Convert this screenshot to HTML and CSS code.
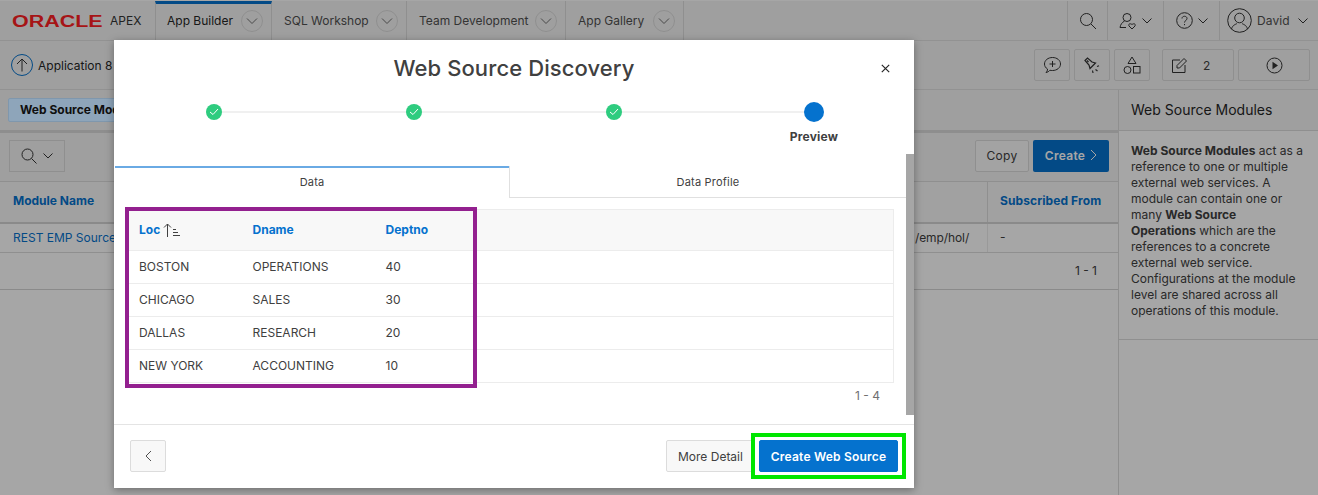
FILE: index.html
```html
<!DOCTYPE html>
<html lang="en">

<head>
  <meta charset="UTF-8" />
  <title>Web Source Discovery</title>
  <link rel="stylesheet" href="styles.css">
</head>

<body>
  <header class="topbar">
    <div class="logo"><span class="logo-oracle">ORACLE</span><span class="logo-apex">APEX</span></div>
    <nav class="tabs">
      <div class="tab tab-active tab-builder"><span>App Builder</span><span class="tab-menu"><svg width="12" height="8" viewBox="0 0 12 8"><path d="M1 1.5l5 5 5-5" /></svg></span></div>
      <div class="tab tab-sql"><span>SQL Workshop</span><span class="tab-menu"><svg width="12" height="8" viewBox="0 0 12 8"><path d="M1 1.5l5 5 5-5" /></svg></span></div>
      <div class="tab tab-team"><span>Team Development</span><span class="tab-menu"><svg width="12" height="8" viewBox="0 0 12 8"><path d="M1 1.5l5 5 5-5" /></svg></span></div>
      <div class="tab tab-gallery"><span>App Gallery</span><span class="tab-menu"><svg width="12" height="8" viewBox="0 0 12 8"><path d="M1 1.5l5 5 5-5" /></svg></span></div>
    </nav>
    <div class="top-actions">
      <div class="top-action action-search">
        <svg class="line-icon" width="18" height="18" viewBox="0 0 18 18"><circle cx="7.5" cy="7.5" r="6" /><path d="M12 12l5 5" /></svg>
      </div>
      <div class="top-action action-admin">
        <svg class="line-icon" width="18" height="18" viewBox="0 0 18 18"><circle cx="8" cy="5.5" r="4" /><path d="M5.5 9C3 10.5 1.5 12.5 1 15.5h6" /><path d="M13 17l-3-3c-1-2 1-3 3-1.500 2-1.500 4-.5 3 1.500z" /></svg>
        <svg class="line-icon" width="10" height="6" viewBox="0 0 10 6"><path d="M.5.5L5 5 9.5.5" /></svg>
      </div>
      <div class="top-action action-help">
        <svg class="line-icon" width="17" height="17" viewBox="0 0 17 17"><circle cx="8.5" cy="8.5" r="7.8" /><path d="M6 6.500c0-3 5-3 5 0 0 2-2.500 2-2.500 4M8.500 12v1.200" /></svg>
        <svg class="line-icon" width="10" height="6" viewBox="0 0 10 6"><path d="M.5.5L5 5 9.5.5" /></svg>
      </div>
      <div class="top-action action-user">
        <svg class="line-icon" width="25" height="25" viewBox="0 0 25 25"><circle cx="12.5" cy="12.5" r="11.8" /><circle cx="12.5" cy="10" r="4.8" /><path d="M4.500 21c1-4 4-4.500 5.500-5.500M20.500 21c-1-4-4-4.500-5.500-5.500" /></svg>
        <span class="user-name">David</span>
        <svg class="line-icon" width="10" height="6" viewBox="0 0 10 6"><path d="M.5.5L5 5 9.5.5" /></svg>
      </div>
    </div>
  </header>

  <div class="toolbar">
    <div class="crumb">
      <span class="up-circle"><svg class="line-icon" width="12" height="14" viewBox="0 0 12 14"><path d="M6 13.500V1M1 6l5-5 5 5" /></svg></span>
      <span>Application 8</span>
    </div>
    <div class="tool-buttons">
      <div class="tool-btn"><svg class="line-icon" width="19" height="18" viewBox="0 0 19 18"><path d="M9.500 1.500c4.500 0 8 2.800 8 6.500s-3.500 6.500-8 6.500c-1 0-1.800 0-2.500-.3-1 1.300-2.500 2-4 2.300 1-1 1.500-2 1.500-3.500-2-1.200-3-3-3-5 0-3.700 3.500-6.500 8-6.500z" /><path d="M9.500 5v6M6.500 8h6" /></svg></div>
      <div class="tool-btn"><svg class="line-icon icon-torch" width="17" height="17" viewBox="0 0 17 17"><path d="M1 3.500L3.500 1l4.500 4 3.500 1L6 11.500 5 8z" /><path d="M3 3.500l1.500 1.500" /><path d="M13 9.500l2-.8M11.500 12.500l2 1.500M8.500 13.500l.5 2.500" /></svg></div>
      <div class="tool-btn"><svg class="line-icon" width="18" height="19" viewBox="0 0 18 19"><path d="M9 1l4 6.500H5z" /><circle cx="4.5" cy="14" r="3.5" /><rect x="10.5" y="10.5" width="6.500" height="6.500" /></svg></div>
      <div class="tool-btn tool-btn-wide tool-edit"><svg class="line-icon" width="17" height="17" viewBox="0 0 17 17"><path d="M9 3H1.500v12.500H14V8" /><path d="M6 8.500L13 1.500l2.500 2.500-7 7H6z" /></svg><span>2</span></div>
      <div class="tool-btn tool-btn-wide"><svg class="line-icon" width="17" height="17" viewBox="0 0 17 17"><circle cx="8.5" cy="8.5" r="7.5" /><path class="icon-fill" d="M6.500 4.800l5.500 3.700-5.500 3.700z" /></svg></div>
    </div>
  </div>

  <div class="main">
    <div class="content">
      <div class="breadcrumb-row"><span class="chip">Web Source Modules</span></div>
      <div class="report-bar">
        <div class="search-btn">
          <svg class="line-icon" width="16" height="16" viewBox="0 0 16 16"><circle cx="6.5" cy="6.5" r="5.5" /><path d="M10.500 10.500l5 5" /></svg>
          <svg class="line-icon" width="10" height="6" viewBox="0 0 10 6"><path d="M.5.5L5 5 9.5.5" /></svg>
        </div>
        <div class="report-actions">
          <div class="btn btn-copy">Copy</div>
          <div class="btn btn-create">Create<svg class="create-arrow" width="7" height="12" viewBox="0 0 7 12"><path d="M1 1l5 5-5 5" /></svg></div>
        </div>
      </div>
      <div class="report-head"><span class="report-name">Module Name</span><span class="report-sub">Subscribed From</span></div>
      <div class="report-row"><a class="report-link">REST EMP Source</a><span class="report-path">/emp/hol/</span><span class="report-dash">-</span></div>
      <div class="report-pager">1 - 1</div>
    </div>
    <aside class="side">
      <h2 class="side-title">Web Source Modules</h2>
      <p class="side-text"><b>Web Source Modules</b> act as a<br>reference to one or multiple<br>external web services. A<br>module can contain one or<br>many <b>Web Source</b><br><b>Operations</b> which are the<br>references to a concrete<br>external web service.<br>Configurations at the module<br>level are shared across all<br>operations of this module.</p>
    </aside>
  </div>

  <div class="overlay"></div>

  <div class="dialog">
    <div class="dialog-head">
      <h1>Web Source Discovery</h1>
      <svg class="dialog-close" width="9" height="9" viewBox="0 0 9 9"><path d="M.8.8l7.400 7.400M8.200.8L.8 8.200" /></svg>
    </div>
    <div class="wizard">
      <div class="wizard-step"><span class="step-dot"><svg width="10" height="8" viewBox="0 0 10 8"><path d="M1 4l3 2.500L9 1" /></svg></span></div>
      <div class="wizard-step"><span class="step-dot"><svg width="10" height="8" viewBox="0 0 10 8"><path d="M1 4l3 2.500L9 1" /></svg></span></div>
      <div class="wizard-step"><span class="step-dot"><svg width="10" height="8" viewBox="0 0 10 8"><path d="M1 4l3 2.500L9 1" /></svg></span></div>
      <div class="wizard-step wizard-current"><span class="step-now"></span><span class="step-label">Preview</span></div>
    </div>
    <div class="dialog-body">
      <div class="dialog-scroll">
        <div class="data-tabs">
          <div class="data-tab data-tab-on">Data</div>
          <div class="data-tab">Data Profile</div>
        </div>
        <table class="data-table">
          <thead>
            <tr>
              <th class="col-loc">Loc <svg class="sort-icon" width="18" height="14" viewBox="0 0 18 14"><path d="M4.500 14V1M1 4.500L4.500 1 8 4.500" /><path d="M10 6.500h3M10 9.500h5M10 12.500h7" /></svg></th>
              <th class="col-dname">Dname</th>
              <th class="col-dept">Deptno</th>
              <th></th>
            </tr>
          </thead>
          <tbody>
            <tr><td>BOSTON</td><td>OPERATIONS</td><td>40</td><td></td></tr>
            <tr><td>CHICAGO</td><td>SALES</td><td>30</td><td></td></tr>
            <tr><td>DALLAS</td><td>RESEARCH</td><td>20</td><td></td></tr>
            <tr><td>NEW YORK</td><td>ACCOUNTING</td><td>10</td><td></td></tr>
          </tbody>
        </table>
        <div class="data-pager">1 - 4</div>
      </div>
      <div class="dialog-scrollbar"></div>
    </div>
    <div class="dialog-foot">
      <div class="foot-btn foot-back"><svg width="7" height="12" viewBox="0 0 7 12"><path d="M6 1L1 6l5 5" /></svg></div>
      <div class="foot-right">
        <div class="foot-btn foot-more">More Detail</div>
        <div class="foot-btn foot-primary">Create Web Source</div>
      </div>
    </div>
    <div class="mark mark-table"></div>
    <div class="mark mark-create"></div>
  </div>
</body>

</html>
```

FILE: styles.css
```css
* {
  margin: 0;
  padding: 0;
  box-sizing: border-box;
}

html,
body {
  height: 495px;
  overflow: hidden;
}

body {
  font-family: Inter, "Liberation Sans", sans-serif;
  font-size: 12px;
  color: #404040;
  background-color: #fff;
  position: relative;
}

svg {
  display: block;
  fill: none;
}

.line-icon path,
.line-icon circle,
.line-icon rect {
  stroke: #333;
  stroke-width: 1;
  fill: none;
}

.line-icon .icon-fill {
  fill: #333;
  stroke: none;
}

.icon-torch path {
  stroke-width: 1.2;
}

/* top bar */
.topbar {
  height: 40px;
  margin-top: 1px;
  background-color: #f5f5f5;
  border-bottom: 1px solid #e0e0e0;
  display: flex;
}

.logo {
  width: 155px;
  padding: 2px 0 0 12px;
  display: flex;
  align-items: center;
  flex-shrink: 0;
}

.logo-oracle {
  font-family: "Liberation Sans", sans-serif;
  font-size: 16px;
  font-weight: 700;
  color: #ff1f24;
  display: inline-block;
  width: 92px;
  transform-origin: left center;
  transform: scaleX(1.34);
}

.logo-apex {
  font-size: 12px;
  color: #333;
  margin: -2px 0 0 6px;
}

.tabs {
  display: flex;
}

.tab {
  height: 39px;
  display: flex;
  align-items: center;
  justify-content: space-between;
  padding: 0 8px 0 12px;
  border-right: 1px solid #dcdcdc;
  font-size: 12px;
  color: #505050;
}

.tab-active {
  color: #262626;
  padding-left: 11px;
  border-left: 1px solid #dcdcdc;
  border-top: 3px solid #0572ce;
  padding-bottom: 3px;
}

.tab-builder { width: 117px; }
.tab-sql { width: 135px; }
.tab-team { width: 159px; }
.tab-gallery { width: 118px; }

.tab-menu {
  width: 22px;
  height: 22px;
  border: 1px solid #dcdcdc;
  border-radius: 50%;
  display: flex;
  align-items: center;
  justify-content: center;
}

.tab-menu path {
  stroke: #707070;
}

.top-actions {
  margin-left: auto;
  display: flex;
}

.top-action {
  height: 39px;
  border-left: 1px solid #dcdcdc;
  display: flex;
  align-items: center;
  justify-content: center;
  gap: 5px;
}

.action-search { width: 40px; }
.action-admin { width: 56px; }
.action-help { width: 56px; }

.action-user {
  width: 99px;
  justify-content: flex-start;
  padding-left: 7px;
}

.user-name {
  font-size: 12px;
  letter-spacing: .1px;
  width: 36px;
  color: #505050;
}

/* second bar */
.toolbar {
  height: 49px;
  background-color: #f5f5f5;
  border-bottom: 1px solid #e0e0e0;
  padding: 8px 8px 0 11px;
  display: flex;
  justify-content: space-between;
}

.crumb {
  display: flex;
  align-items: center;
  gap: 5px;
  height: 32px;
  font-size: 12px;
  color: #262626;
}

.up-circle {
  width: 22px;
  height: 22px;
  border: 1px solid #0572ce;
  border-radius: 50%;
  display: flex;
  align-items: center;
  justify-content: center;
}

.tool-buttons {
  display: flex;
  gap: 4px;
}

.tool-btn {
  width: 36px;
  height: 32px;
  border: 1px solid #dcdcdc;
  border-radius: 2px;
  display: flex;
  align-items: center;
  justify-content: center;
}

.tool-btn-wide {
  width: 72px;
}

.tool-edit {
  margin-left: 8px;
  justify-content: flex-start;
  padding-left: 8px;
  gap: 15px;
}

/* page body */
.main {
  display: flex;
  height: 405px;
}

.content {
  width: 1118px;
  flex-shrink: 0;
}

.breadcrumb-row {
  height: 43px;
  padding: 8px 0 0 8px;
  border-bottom: 3px solid #dadada;
  background-color: #f5f5f5;
}

/* this tint is lighter than the overlay allows, so it sits above it */
.chip {
  display: inline-block;
  position: relative;
  z-index: 1;
  height: 24px;
  line-height: 22px;
  padding: 0 11px;
  background-color: #8ea5ba;
  border: 1px solid #7f97ad;
  border-radius: 2px;
  font-weight: 700;
  color: #0f0f0f;
}

.report-bar {
  height: 48px;
  padding: 7px 9px 0;
  display: flex;
  justify-content: space-between;
  background-color: #f5f5f5;
}

.search-btn {
  width: 56px;
  height: 32px;
  border: 1px solid #dcdcdc;
  display: flex;
  align-items: center;
  justify-content: center;
  gap: 6px;
}

.report-actions {
  display: flex;
  gap: 4px;
}

.btn {
  height: 32px;
  padding-bottom: 2px;
  display: flex;
  align-items: center;
  justify-content: center;
  border-radius: 2px;
  letter-spacing: .3px;
}

.btn-copy {
  width: 54px;
  border: 1px solid #dcdcdc;
  background-color: #fafafa;
}

.btn-create {
  width: 76px;
  background-color: #0572ce;
  color: #fff;
  font-weight: 600;
  gap: 5px;
}

.create-arrow path {
  stroke: #fff;
}

.report-head {
  height: 43px;
  display: flex;
  justify-content: space-between;
  padding-left: 13px;
  background-color: #f8f8f8;
  border-top: 1px solid #dcdcdc;
  border-bottom: 2px solid #d4d4d4;
  font-weight: 700;
  color: #0572ce;
}

.report-name {
  line-height: 37px;
}

.report-sub {
  width: 131px;
  line-height: 37px;
  padding-left: 12px;
  border-left: 1px solid #dcdcdc;
  letter-spacing: .1px;
}

.report-row {
  height: 29px;
  display: flex;
  align-items: center;
  border-bottom: 1px solid #dcdcdc;
  padding-left: 13px;
}

.report-link {
  color: #0572ce;
  padding-bottom: 2px;
}

.report-path {
  margin-left: auto;
  width: 72px;
  padding-bottom: 2px;
  letter-spacing: -.1px;
}

.report-dash {
  width: 131px;
  height: 28px;
  line-height: 26px;
  padding-left: 12px;
  border-left: 1px solid #ececec;
}

.report-pager {
  height: 37px;
  line-height: 36px;
  text-align: right;
  padding-right: 21px;
  border-bottom: 1px solid #d4d4d4;
  background-color: #fff;
}

.side {
  flex: 1;
  border-left: 1px solid #dcdcdc;
}

.side-title {
  height: 41px;
  line-height: 40px;
  padding-left: 12px;
  font-size: 14px;
  font-weight: 400;
  color: #262626;
  border-bottom: 1px solid #dcdcdc;
  background-color: #f5f5f5;
}

.side-text {
  padding: 12px 0 20px 12px;
  line-height: 16px;
  border-bottom: 1px solid #dcdcdc;
}

.overlay {
  position: absolute;
  inset: 0;
  background-color: rgba(0, 0, 0, .35);
}

/* dialog */
.dialog {
  position: absolute;
  z-index: 2;
  left: 114px;
  top: 40px;
  width: 800px;
  height: 448px;
  background-color: #fff;
  box-shadow: 0 2px 8px rgba(0, 0, 0, .35);
  display: flex;
  flex-direction: column;
}

.dialog-head {
  height: 56px;
  display: flex;
  align-items: center;
  justify-content: center;
  position: relative;
}

.dialog-head h1 {
  font-size: 22px;
  font-weight: 500;
  color: #404040;
  letter-spacing: .1px;
}

.dialog-close {
  position: absolute;
  right: 24px;
  top: 24px;
}

.dialog-close path {
  stroke: #262626;
  stroke-width: 1.2;
}

.wizard {
  height: 58px;
  display: flex;
  justify-content: center;
  align-items: flex-start;
  background: linear-gradient(#f0f0f0, #f0f0f0) no-repeat 100px 15px / 600px 2px;
}

.wizard-step {
  width: 200px;
  height: 58px;
  display: flex;
  flex-direction: column;
  align-items: center;
  padding-top: 8px;
}

.step-dot {
  width: 16px;
  height: 16px;
  border-radius: 50%;
  background-color: #2ecc7f;
  display: flex;
  align-items: center;
  justify-content: center;
}

.step-dot path {
  stroke: #fff;
  stroke-width: 1;
}

.wizard-current {
  padding-top: 6px;
}

.step-now {
  width: 20px;
  height: 20px;
  border-radius: 50%;
  background-color: #0572ce;
}

.step-label {
  margin-top: 7px;
  font-size: 12px;
  font-weight: 700;
  letter-spacing: .2px;
  color: #404040;
}

.dialog-body {
  height: 270px;
  display: flex;
  flex-shrink: 0;
}

.dialog-scroll {
  width: 792px;
  padding: 12px 0 0;
  flex-shrink: 0;
}

.dialog-scrollbar {
  width: 8px;
  height: 261px;
  background-color: #a6a6a6;
}

.data-tabs {
  display: flex;
  height: 32px;
  margin-left: 1px;
}

.data-tab {
  flex: 1;
  border-bottom: 1px solid #e0e0e0;
  border-left: 1px solid #e0e0e0;
  display: flex;
  align-items: center;
  justify-content: center;
  font-size: 11px;
  letter-spacing: .2px;
  padding-top: 1px;
}

.data-tab-on {
  flex: 0 0 394px;
  border: 0;
  border-top: 2px solid #6aaae4;
  padding: 0 0 2px;
}

.data-table {
  width: 769px;
  margin: 11px 0 0 11px;
  border-collapse: collapse;
  border: 1px solid #ececec;
  table-layout: fixed;
}

.data-table th {
  height: 41px;
  background-color: #f8f8f8;
  color: #0572ce;
  font-weight: 700;
  text-align: left;
  padding: 0 0 2px 13px;
  border-bottom: 1px solid #ececec;
  font-size: 12px;
}

.data-table td {
  height: 33px;
  padding: 0 0 2px 13px;
  border-bottom: 1px solid #ececec;
  font-size: 12px;
}

.col-loc { width: 114px; }
.col-dname { width: 133px; }
.col-dept { width: 100px; }

.sort-icon {
  display: inline-block;
  vertical-align: -3px;
}

.sort-icon path {
  stroke: #404040;
}

.data-pager {
  width: 766px;
  margin-top: 5px;
  text-align: right;
  color: #707070;
}

.dialog-foot {
  flex: 1;
  border-top: 1px solid #e4e4e4;
  padding: 15px 16px 0;
  display: flex;
  justify-content: space-between;
  align-items: flex-start;
}

.foot-right {
  display: flex;
  gap: 4px;
}

.foot-btn {
  height: 32px;
  display: flex;
  align-items: center;
  justify-content: center;
  border: 1px solid #dcdcdc;
  border-radius: 2px;
  background-color: #f8f8f8;
  white-space: nowrap;
}

.foot-more {
  width: 89px;
  justify-content: flex-start;
  padding-left: 11px;
}

.foot-back {
  width: 36px;
}

.foot-back path {
  stroke: #505050;
}

.foot-primary {
  width: 139px;
  border-color: #0572ce;
  background-color: #0572ce;
  color: #fff;
  font-weight: 600;
  letter-spacing: .2px;
}

/* annotation frames drawn over the screenshot */
.mark {
  position: absolute;
  border-style: solid;
  border-width: 4px;
  pointer-events: none;
}

.mark-table {
  left: 11px;
  top: 167px;
  width: 352px;
  height: 181px;
  border-color: #93208f;
}

.mark-create {
  left: 637px;
  top: 393px;
  width: 155px;
  height: 46px;
  border-color: #00e600;
}
```
